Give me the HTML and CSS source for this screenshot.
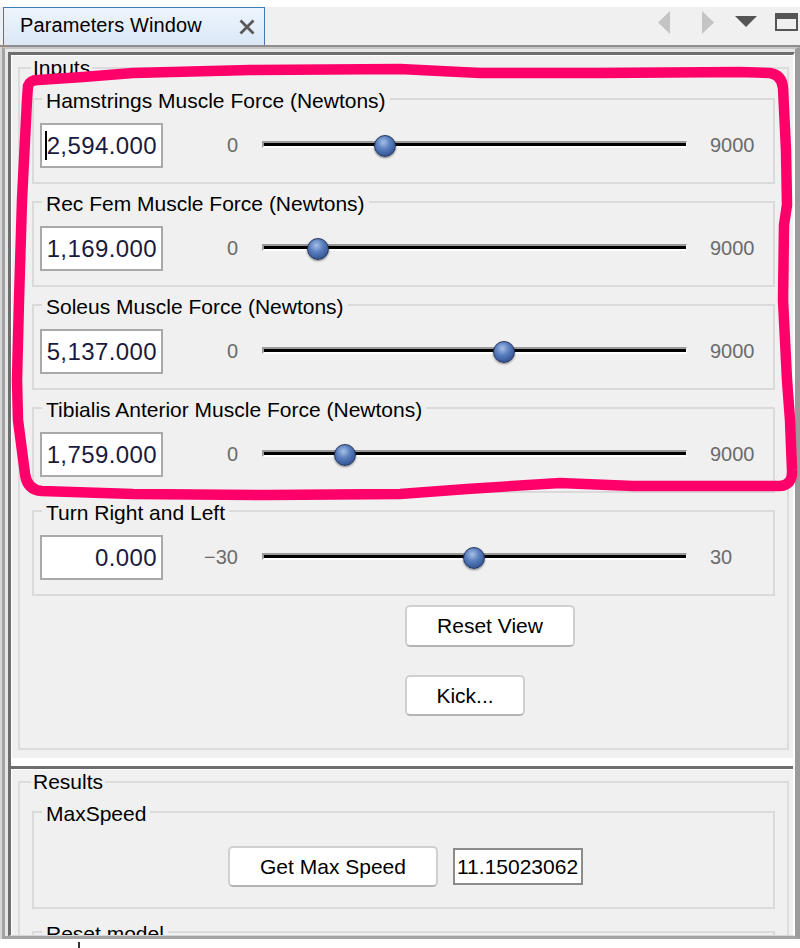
FILE: index.html
```html
<!DOCTYPE html>
<html>
<head>
<meta charset="utf-8">
<title>Parameters Window</title>
<link rel="stylesheet" href="styles.css">
</head>
<body>
<div class="page">
  <div class="header">
    <div class="tab">
      <span class="tab-title">Parameters Window</span>
      <svg class="tab-close" width="16" height="16" viewBox="0 0 16 16"><path d="M1.5 1.5 L14.5 14.5 M14.5 1.5 L1.5 14.5" stroke="#585858" stroke-width="2.8" fill="none"/></svg>
    </div>
    <svg class="header-icons" width="145" height="38" viewBox="0 0 145 38">
      <polygon points="15,4 15,27 3,15.5" fill="#c4c4c4"/>
      <polygon points="47,4 47,27 59,15.5" fill="#c4c4c4"/>
      <polygon points="80,9 102,9 91,20" fill="#555"/>
      <rect x="120" y="6" width="23" height="18" fill="#555"/>
      <rect x="122" y="12" width="19" height="10" fill="#f0f0f0"/>
    </svg>
  </div>
  <div class="sep"></div>
  <div class="frame">
    <div class="viewport">
      <div class="upper">
        <fieldset class="section">
          <legend class="section-title">Inputs</legend>

          <fieldset class="group">
            <legend class="group-title">Hamstrings Muscle Force (Newtons)</legend>
            <div class="row">
              <div class="field"><span class="caret"></span>2,594.000</div>
              <span class="min">0</span>
              <div class="slider"><div class="track"></div><div class="thumb" style="--v:0.2882"></div></div>
              <span class="max">9000</span>
            </div>
          </fieldset>

          <fieldset class="group">
            <legend class="group-title">Rec Fem Muscle Force (Newtons)</legend>
            <div class="row">
              <div class="field">1,169.000</div>
              <span class="min">0</span>
              <div class="slider"><div class="track"></div><div class="thumb" style="--v:0.1299"></div></div>
              <span class="max">9000</span>
            </div>
          </fieldset>

          <fieldset class="group">
            <legend class="group-title">Soleus Muscle Force (Newtons)</legend>
            <div class="row">
              <div class="field">5,137.000</div>
              <span class="min">0</span>
              <div class="slider"><div class="track"></div><div class="thumb" style="--v:0.5708"></div></div>
              <span class="max">9000</span>
            </div>
          </fieldset>

          <fieldset class="group">
            <legend class="group-title">Tibialis Anterior Muscle Force (Newtons)</legend>
            <div class="row">
              <div class="field">1,759.000</div>
              <span class="min">0</span>
              <div class="slider"><div class="track"></div><div class="thumb" style="--v:0.1954"></div></div>
              <span class="max">9000</span>
            </div>
          </fieldset>

          <fieldset class="group">
            <legend class="group-title">Turn Right and Left</legend>
            <div class="row">
              <div class="field">0.000</div>
              <span class="min">&minus;30</span>
              <div class="slider"><div class="track"></div><div class="thumb" style="--v:0.5"></div></div>
              <span class="max">30</span>
            </div>
          </fieldset>

          <div class="actions">
            <button class="btn btn-reset">Reset View</button>
            <button class="btn btn-kick">Kick...</button>
          </div>
        </fieldset>
      </div>
      <div class="divider"></div>
      <div class="lower">
        <fieldset class="section results">
          <legend class="section-title">Results</legend>
          <fieldset class="group maxspeed">
            <legend class="group-title">MaxSpeed</legend>
            <div class="speed-row">
              <button class="btn btn-speed">Get Max Speed</button>
              <div class="speed-field">11.15023062</div>
            </div>
          </fieldset>
          <fieldset class="group reset-model">
            <legend class="group-title">Reset model</legend>
            <div class="reset-body"></div>
          </fieldset>
        </fieldset>
      </div>
    </div>
  </div>
  <div class="tick"></div>

  <svg class="annot" width="800" height="948" viewBox="0 0 800 948">
    <path d="M28 86 Q30 80 38 80 L83 77 L133 73 L250 70 L400 69 L480 73 L600 73 L740 72 L770 73 Q782 75 783 88 L786 150 L787 205 L784 225 L783 300 L787 380 L790 420 L792 470 Q793 485 780 486 L633 486 L560 483 L467 489 L400 494 L267 495 L133 494 L42 491 Q27 490 25 474 L18 420 L17 380 L19 300 L22 200 L27 100 Z" fill="none" stroke="#ff006a" stroke-width="10.5" stroke-linejoin="round" stroke-linecap="round"/>
  </svg>
</div>
</body>
</html>
```

FILE: styles.css
```css
html, body {
  margin: 0;
  padding: 0;
  background: #ffffff;
  overflow: hidden;
}

.page {
  position: relative;
  width: 800px;
  height: 948px;
  padding-top: 7px;
  box-sizing: border-box;
  font-family: "Liberation Sans", Arial, sans-serif;
  color: #000;
}

/* ---------- header / tab bar ---------- */
.header {
  display: flex;
  height: 38px;
  background: #f0f0f0;
}

.tab {
  margin-left: 3px;
  width: 262px;
  height: 38px;
  box-sizing: border-box;
  border: 1px solid #3d7bb0;
  border-bottom: 0;
  background: linear-gradient(#edf4fc, #dbe8f7);
  display: flex;
  align-items: center;
  padding: 0 9px 3px 16px;
}

.tab-title {
  font-size: 20px;
  letter-spacing: 0.1px;
}

.tab-close {
  margin-left: auto;
  margin-top: 3px;
}

.header-icons {
  margin-left: auto;
  display: block;
}

.sep {
  height: 2px;
  background: #8e8e8e;
}

/* ---------- frame ---------- */
.frame {
  margin-left: 2px;
  border-left: 3px solid #a3a3a3;
  border-right: 5px solid #9b9b9b;
  border-top: 2px solid #c4c4c4;
  border-bottom: 3px solid #a3a3a3;
  padding: 3px 0 0 3px;
  background: #e6e6e6;
  box-shadow: -2px 0 0 #d8d8d8;
}

.viewport {
  border-top: 3px solid #6e6e6e;
  border-left: 3px solid #6e6e6e;
  border-right: 2px solid #ffffff;
  border-bottom: 1px solid #d6d6d6;
  background: #f0f0f0;
  box-shadow: inset 1px 1px 0 #ffffff;
}

.upper {
  padding: 2px 0 8px;
}

.divider {
  height: 8px;
  background: #ffffff;
}

.lower {
  height: 169px;
  box-sizing: border-box;
  border-top: 3px solid #6e6e6e;
  box-shadow: inset 0 1px 0 #ffffff;
  padding-top: 2px;
  overflow: hidden;
}

/* ---------- titled boxes ---------- */
fieldset {
  min-inline-size: 0;
}

.section {
  margin: 0 4px 0 7px;
  padding: 7px 12px 32px;
  border: 2px solid #dcdcdc;
}

.section-title {
  font-size: 21px;
  line-height: 22px;
  padding: 0 2px;
  margin-left: -1px;
}

.group {
  margin: 0;
  padding: 11px 6px 14px;
  border: 2px solid #dadada;
}

.group + .group {
  margin-top: 5px;
}

.group-title {
  font-size: 21px;
  line-height: 22px;
  padding: 4px 4px 0;
  margin-left: 2px;
}

/* ---------- slider rows ---------- */
.row {
  display: flex;
  align-items: center;
  height: 45px;
}

.field {
  width: 123px;
  height: 45px;
  box-sizing: border-box;
  border: 2px solid #a9a9a9;
  background: #ffffff;
  display: flex;
  align-items: center;
  justify-content: flex-end;
  padding-right: 4px;
  font-size: 24px;
  letter-spacing: 0.4px;
  color: #1a1a40;
}

.caret {
  display: block;
  width: 2px;
  height: 29px;
  background: #000;
  margin-right: 0;
}

.min {
  width: 75px;
  text-align: right;
  font-size: 20px;
  color: #6b6b6b;
}

.max {
  margin-left: 23px;
  font-size: 20px;
  color: #6b6b6b;
}

.slider {
  position: relative;
  margin-left: 24px;
  width: 425px;
  height: 22px;
  display: flex;
  align-items: center;
}

.track {
  width: 100%;
  height: 7px;
  box-sizing: border-box;
  background: #000;
  border-top: 2px solid #9a9a9a;
  border-left: 2px solid #9a9a9a;
  border-bottom: 2px solid #ffffff;
  border-right: 1px solid #ffffff;
  margin-bottom: 2px;
}

.thumb {
  position: absolute;
  top: 0;
  left: calc(var(--v) * 422px - 10px);
  width: 22px;
  height: 22px;
  box-sizing: border-box;
  border-radius: 50%;
  border: 1px solid #25365a;
  background: radial-gradient(circle at 42% 32%, #a6bfe6 0%, #5a7fbe 38%, #3a5d9d 70%, #233f78 100%);
  box-shadow: 0 1px 2px rgba(0, 0, 0, 0.45);
}

/* ---------- buttons ---------- */
.actions {
  display: flex;
  flex-direction: column;
  align-items: flex-start;
  margin-left: 373px;
}

.btn {
  font-family: "Liberation Sans", Arial, sans-serif;
  font-size: 21px;
  color: #000;
  background: #ffffff;
  border: 2px solid #d0d0d0;
  border-bottom-color: #b4b4b4;
  border-radius: 5px;
  padding: 0;
  box-sizing: border-box;
}

.btn-reset {
  width: 170px;
  height: 42px;
  margin-top: 9px;
}

.btn-kick {
  width: 120px;
  height: 41px;
  margin-top: 28px;
}

/* ---------- results ---------- */
.results {
  padding-top: 6px;
}

.maxspeed {
  padding: 21px 6px 20px;
}

.speed-row {
  display: flex;
  justify-content: center;
  align-items: center;
  gap: 15px;
  padding-left: 4px;
}

.btn-speed {
  width: 210px;
  height: 41px;
}

.speed-field {
  width: 130px;
  height: 37px;
  box-sizing: border-box;
  border: 2px solid #8c8c8c;
  background: #ffffff;
  font-size: 21px;
  line-height: 33px;
  padding-left: 2px;
}

.reset-model {
  margin-top: 10px;
}

.group + .reset-model {
  margin-top: 10px;
}

.reset-body {
  height: 60px;
}

.tick {
  margin: 3px 0 0 78px;
  width: 2px;
  height: 6px;
  background: #333;
}

/* ---------- hand-drawn annotation ---------- */
.annot {
  position: absolute;
  left: 0;
  top: 0;
  pointer-events: none;
}
```
